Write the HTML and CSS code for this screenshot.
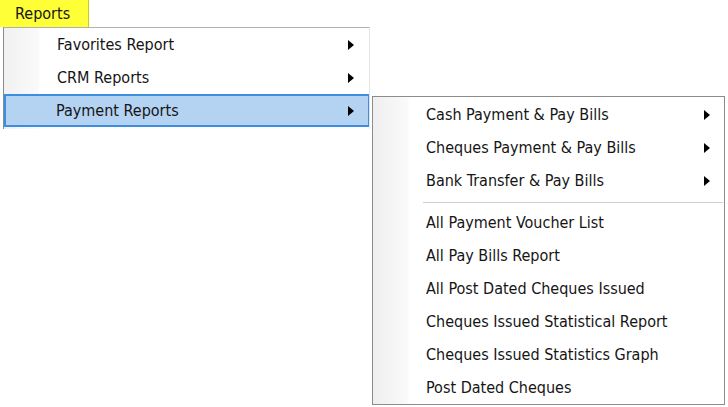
FILE: index.html
```html
<!DOCTYPE html>
<html lang="en">
<head>
  <meta charset="UTF-8" />
  <title>Reports menu</title>
  <link rel="stylesheet" href="styles.css">
</head>
<body>

  <div class="menubar">
    <span class="tab">Reports</span>
  </div>

  <div class="menu">
    <div class="item">Favorites Report <span class="arrow"></span></div>
    <div class="item">CRM Reports <span class="arrow"></span></div>
    <div class="item active">Payment Reports <span class="arrow"></span></div>
  </div>

  <!-- flyout opened from Payment Reports -->
  <div class="menu submenu">
    <div class="item">Cash Payment &amp; Pay Bills <span class="arrow"></span></div>
    <div class="item">Cheques Payment &amp; Pay Bills <span class="arrow"></span></div>
    <div class="item">Bank Transfer &amp; Pay Bills <span class="arrow"></span></div>
    <div class="sep"></div>
    <div class="item">All Payment Voucher List</div>
    <div class="item">All Pay Bills Report</div>
    <div class="item">All Post Dated Cheques Issued</div>
    <div class="item">Cheques Issued Statistical Report</div>
    <div class="item">Cheques Issued Statistics Graph</div>
    <div class="item">Post Dated Cheques</div>
  </div>

</body>
</html>
```

FILE: styles.css
```css
:root {
  --text: #151515;
  --border: #8c8c8c;
  --hi-bg: #b4d3f2;
  --hi-border: #3d8ee0;
}
body {
  margin: 0;
  background: #fff;
  color: var(--text);
  font-family: 'DejaVu Sans Condensed', 'DejaVu Sans', sans-serif;
  font-stretch: condensed;
  font-size: 16px;
  position: relative;
  width: 728px;
  height: 407px;
  overflow: hidden;
}
.menubar {
  height: 27px;
}
.tab {
  display: inline-block;
  box-sizing: border-box;
  width: 89px;
  height: 27px;
  line-height: 27px;
  padding-left: 15px;
  background: #ffff38;
  border-right: 1px solid #c9c92a;
}
.menu {
  position: relative;
  margin-left: 3px;
  width: 365px;
  border-left: 1px solid var(--border);
  border-top: 1px solid #b0b0b0;
  border-right: 1px solid #e6e6e6;
  background: linear-gradient(to right, #f1f1f1 0, #fafafa 34px, #fff 36px);
  padding-bottom: 2px;
}
.item {
  position: relative;
  box-sizing: border-box;
  height: 33px;
  line-height: 32px;
  padding-left: 51px;
  border: 1px solid transparent;
  margin-left: 1px;
}
.item.active {
  background: var(--hi-bg);
  border: 2px solid var(--hi-border);
  border-width: 2px 1px 2px 2px;
  margin-left: 0;
  padding-left: 50px;
  line-height: 29px;
}
.arrow {
  position: absolute;
  right: 14px;
  top: 11px;
  width: 0;
  height: 0;
  border-top: 5px solid transparent;
  border-bottom: 5px solid transparent;
  border-left: 6px solid #000;
}
.item.active .arrow {
  top: 10px;
}
.submenu {
  position: absolute;
  left: 372px;
  top: 96px;
  margin: 0;
  width: 351px;
  height: 306px;
  border: 1px solid var(--border);
  padding: 1px 0 0 0;
  background: linear-gradient(to right, #efefef 0, #fafafa 34px, #fff 37px);
}
.submenu .item {
  padding-left: 51px;
}
.submenu .arrow {
  right: 13px;
}
.sep {
  height: 9px;
  margin-left: 50px;
  margin-right: 1px;
  position: relative;
}
.sep::after {
  content: '';
  position: absolute;
  left: 0;
  right: 0;
  top: 5px;
  border-top: 1px solid #cfcfcf;
  border-bottom: 1px solid #fff;
}
```
